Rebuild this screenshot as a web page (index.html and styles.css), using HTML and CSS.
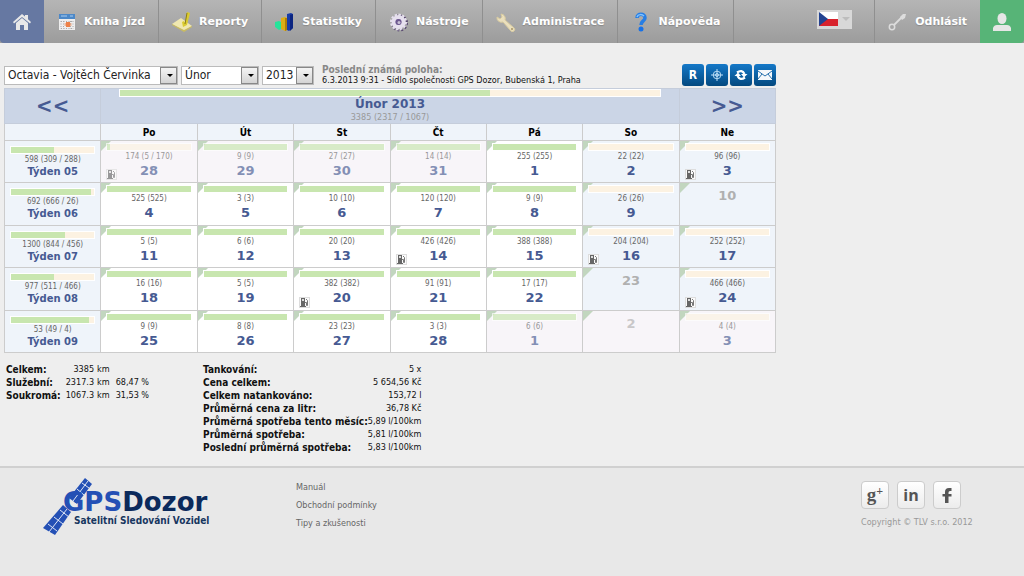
FILE: index.html
```html
<!DOCTYPE html>
<html lang="cs">
<head>
<meta charset="utf-8">
<title>GPS Dozor – Kniha jízd</title>
<link rel="stylesheet" href="styles.css">
</head>
<body>
<svg class="defs" aria-hidden="true">
  <symbol id="fuel" viewBox="0 0 9 9">
    <path d="M1 0h4v8h1v1H0V8h1z" fill="#666"/><path d="M2 1h2v2H2z" fill="#ddd"/>
    <path d="M5 4.500H6.500V7.500H7.500V2.500L6 1" fill="none" stroke="#777"/>
  </symbol>
</svg>
<header class="nav">
  <a class="home" href="#" aria-label="Domů"><svg width="18" height="18" viewBox="0 0 18 18"><path d="M9 1L0 9l1 1.500L9 4l8 6.500L18 9l-3-2.700V2h-3v1.600z" fill="#e8e8e8"/><path d="M3 10l6-5 6 5v7h-4v-5H7v5H3z" fill="#e8e8e8"/></svg></a>
  <nav class="menu">
    <a class="item" href="#"><svg width="20" height="20" viewBox="0 0 20 20"><path d="M2 2h16v16H2z" fill="#eee"/><path d="M2 2h16v5H2z" fill="#4c88c8"/><path d="M4 4h6M13 4h3" stroke="#a9cdf0"/><path d="M4 9v8M6.500 9v8M13.500 9v8M16 9v8M4 9.500h12M4 16.500h12" stroke="#aaa" stroke-dasharray="1 1.500"/><path d="M9 10h4v5H9z" fill="#ed8148"/><path d="M7.500 11h7v3h-7z" fill="#ed8148" opacity=".5"/></svg>Kniha jízd</a>
    <a class="item" href="#"><svg width="20" height="20" viewBox="0 0 20 20"><path d="M0 12L9 6l11 8-8 5z" fill="#f0e8b0"/><path d="M0 12l12 6 8-4v1l-8 5L0 13z" fill="#c9bb62"/><path d="M15 0l3 1-3 12-4 2-1-5 2-1 1 2z" fill="#dacb30"/><path d="M15 1l-2 11" stroke="#8b7d18" fill="none"/></svg>Reporty</a>
    <a class="item" href="#"><svg width="20" height="20" viewBox="0 0 20 20"><path d="M0 10l4-1 2 1v7l-2 1-4-3z" fill="#25e39a"/><path d="M6 6l4-1 2 1v12l-2 1-4-2z" fill="#dcae16"/><path d="M12 2l4-1 2 1v14l-4 3-2-1z" fill="#183ca8"/><path d="M15 3l3-1v14l-3 3z" fill="#0c2581"/><path d="M10 6l2 0v12l-2 1z" fill="#b07f08"/></svg>Statistiky</a>
    <a class="item" href="#"><svg width="20" height="20" viewBox="0 0 20 20"><circle cx="10.500" cy="11" r="7.500" fill="none" stroke="#594971" stroke-width="2" stroke-dasharray="2 2"/><circle cx="9.500" cy="10" r="7.500" fill="none" stroke="#e6e0ee" stroke-width="2" stroke-dasharray="2.400 1.500"/><circle cx="9.500" cy="10" r="5" fill="#a493bd" stroke="#e6e0ee" stroke-width="4"/><circle cx="9.500" cy="10" r="3" fill="#6d5890"/><circle cx="10" cy="10.500" r="1.500" fill="#c9c0d6"/></svg>Nástroje</a>
    <a class="item" href="#"><svg width="20" height="20" viewBox="0 0 20 20"><path d="M5 2a4.500 4.500 0 0 1 4 6l9 8a2 2 0 0 1-3 3L7 10A4.500 4.500 0 0 1 1 5l3 2 2-2z" fill="#eadfbd" stroke="#d8cba0" stroke-width="1"/><circle cx="16" cy="17" r="1" fill="#a79567"/></svg>Administrace</a>
    <a class="item" href="#"><svg width="20" height="20" viewBox="0 0 20 20"><path d="M6 6c0-5 8-5 8 0 0 3-4 3-4 7" fill="none" stroke="#277ee4" stroke-width="3.500"/><path d="M6 5c1-3 5-3 7-1" fill="none" stroke="#82c3ff" stroke-width="1.500"/><circle cx="10" cy="17" r="2.500" fill="#1671e8"/></svg>Nápověda</a>
  </nav>
  <button class="lang" type="button" aria-label="Jazyk: čeština"><svg width="35" height="19" viewBox="0 0 35 19"><path d="M2 2h19v7H2z" fill="#fff"/><path d="M2 9h19v7H2z" fill="#d8222c"/><path d="M2 2l9 7-9 7z" fill="#234391"/><path d="M25 7h8l-4 4z" fill="#bdbdbd"/></svg></button>
  <a class="item logout" href="#"><svg width="20" height="20" viewBox="0 0 20 20"><circle cx="4" cy="15" r="2.700" fill="none" stroke="#ddd" stroke-width="1.500"/><path d="M6 13l8-8" stroke="#ddd" stroke-width="1.800"/><path d="M12 5l3-3 3 0-1 4-3 2z" fill="#ddd"/></svg>Odhlásit</a>
  <a class="user" href="#" aria-label="Uživatel"><svg width="18" height="18" viewBox="0 0 18 18"><ellipse cx="9" cy="5.500" rx="4.500" ry="5.500" fill="#e6e6e6"/><path d="M0 18v-3q1-3 4-3h10q3 0 4 3v3z" fill="#e6e6e6"/></svg></a>
</header>

<main class="content">
  <div class="toolbar">
    <form class="filters">
      <span class="pick car"><select aria-label="Vozidlo"><option>Octavia - Vojtěch Červinka</option></select></span>
      <span class="pick month"><select aria-label="Měsíc"><option>Únor</option></select></span>
      <span class="pick year"><select aria-label="Rok"><option>2013</option></select></span>
    </form>
    <div class="position"><strong>Poslední známá poloha:</strong><span>6.3.2013 9:31 - Sídlo společnosti GPS Dozor, Bubenská 1, Praha</span></div>
    <div class="actions">
      <button type="button">R</button>
      <button type="button" aria-label="Zaměřit"><svg width="14" height="14" viewBox="0 0 14 14" fill="none" stroke="#b9dcf5"><circle cx="7" cy="7" r="3.800"/><circle cx="7" cy="7" r="1.500"/><path d="M7 1v12M1 7h12"/></svg></button>
      <button type="button" aria-label="Obnovit"><svg width="14" height="14" viewBox="0 0 14 14"><path d="M3 4.500Q8 1 10.500 6" fill="none" stroke="#fff" stroke-width="2.200"/><path d="M7 6h6.500L10 9.500z" fill="#fff"/><path d="M11 9.500Q6 13 3.500 8" fill="none" stroke="#fff" stroke-width="2.200"/><path d="M7 8H.5L4 4.500z" fill="#fff"/></svg></button>
      <button type="button" aria-label="Zpráva"><svg width="14" height="10" viewBox="0 0 14 10"><path d="M0 0h14v10H0z" fill="#f4f8fb"/><path d="M0 1l7 5 7-5M0 9l4-5M14 9l-4-5" fill="none" stroke="#2771ad"/></svg></button>
    </div>
  </div>

  <table class="calendar">
    <thead>
      <tr class="top">
        <td><a class="arrow" href="#" aria-label="Předchozí měsíc">&lt;&lt;</a></td>
        <td colspan="6"><div class="bar wide"><i style="width:68.5%"></i></div><h1>Únor 2013</h1><p>3385 (2317 / 1067)</p></td>
        <td><a class="arrow" href="#" aria-label="Další měsíc">&gt;&gt;</a></td>
      </tr>
      <tr class="days"><th></th><th>Po</th><th>Út</th><th>St</th><th>Čt</th><th>Pá</th><th>So</th><th>Ne</th></tr>
    </thead>
    <tbody id="weeks"></tbody>
  </table>

  <div class="stats">
    <table class="totals">
      <tr><th>Celkem:</th><td>3385</td><td>km</td><td></td></tr>
      <tr><th>Služební:</th><td>2317.3</td><td>km</td><td>68,47 %</td></tr>
      <tr><th>Soukromá:</th><td>1067.3</td><td>km</td><td>31,53 %</td></tr>
    </table>
    <table class="fueling">
      <tr><th>Tankování:</th><td>5 x</td></tr>
      <tr><th>Cena celkem:</th><td>5 654,56 Kč</td></tr>
      <tr><th>Celkem natankováno:</th><td>153,72 l</td></tr>
      <tr><th>Průměrná cena za litr:</th><td>36,78 Kč</td></tr>
      <tr><th>Průměrná spotřeba tento měsíc:</th><td>5,89 l/100km</td></tr>
      <tr><th>Průměrná spotřeba:</th><td>5,81 l/100km</td></tr>
      <tr><th>Poslední průměrná spotřeba:</th><td>5,83 l/100km</td></tr>
    </table>
  </div>
</main>

<footer class="footer">
  <a class="logo" href="#">
    <svg width="172" height="60" viewBox="0 0 172 60" role="img" aria-label="GPSDozor Satelitní Sledování Vozidel">
      <g fill="#2450b5"><path d="M42 0l7 6-15 20-8-6z"/><path d="M20 27l8 7-16 23L0 50z"/></g>
      <path d="M45 3L30 23M34 11l7 6M39 5l7 5M24 31L6 54M17 32l9 7M11 39l9 7M5 46l9 7" stroke="#dfe6f5" fill="none"/>
      <text class="brand" x="20" y="33"><tspan fill="#2450b5">GPS</tspan><tspan fill="#0b2a5c">Dozor</tspan></text>
      <text class="tagline" x="31" y="46">Satelitní Sledování Vozidel</text>
    </svg>
  </a>
  <nav class="links"><a href="#">Manuál</a><a href="#">Obchodní podmínky</a><a href="#">Tipy a zkušenosti</a></nav>
  <div class="social">
    <div class="badges">
      <a class="gplus" href="#" aria-label="Google+">g<sup>+</sup></a>
      <a href="#" aria-label="LinkedIn">in</a>
      <a href="#" aria-label="Facebook"><svg width="10" height="15" viewBox="0 0 10 15"><path d="M9.500 0v3H8Q6.500 3 6.500 4.500V6h3v2.500h-3V15h-3.500V8.500H.5V6H3V4q0-4 4-4z" fill="#555"/></svg></a>
    </div>
    <small>Copyright © TLV s.r.o. 2012</small>
  </div>
</footer>
<script src="calendar.js"></script>
</body>
</html>
```
FILE: styles.css
```css
* { box-sizing: border-box; }
body {
  margin: 0;
  min-height: 100vh;
  display: flex;
  flex-direction: column;
  background: #eee;
  color: #111;
  font: 10px/13px "DejaVu Sans Condensed", "DejaVu Sans", sans-serif;
}
a { color: inherit; text-decoration: none; }
button, select { font: inherit; }
.defs { display: none; }

.nav {
  display: flex;
  height: 43px;
  background: linear-gradient(#b5b5b5, #9c9c9c);
  color: #fff;
}
.home, .user { width: 44px; display: flex; align-items: center; justify-content: center; }
.home { background: #6678a2; border-bottom-left-radius: 4px; }
.user { background: #57b477; border-bottom-right-radius: 4px; }
.menu { display: flex; flex: 1; }
.item {
  display: flex;
  align-items: center;
  gap: 7px;
  padding: 0 13px;
  border-right: 1px solid #8f8f8f;
  font: bold 11px/13px "DejaVu Sans", sans-serif;
  text-shadow: 0 1px 1px #888;
}
.logout { border-left: 1px solid #8f8f8f; border-right: 0; }
.lang {
  align-self: center;
  height: 19px;
  margin: 0 22px 4px 0;
  padding: 0;
  border: 0;
  background: #d8d8d8;
}
.lang svg { display: block; }

.content { padding: 21px 4px 12px; }
.toolbar {
  display: flex;
  align-items: center;
  max-width: 772px;
  height: 22px;
}
.filters { display: flex; gap: 3px; }
.pick {
  position: relative;
  display: block;
  height: 19px;
  border: 1px solid #bbb;
  background: #fff;
}
.car { width: 174px; }
.month { width: 78px; }
.year { width: 52px; }
.pick select {
  display: block;
  width: 100%;
  height: 17px;
  padding: 0 16px 0 3px;
  border: 0;
  appearance: none;
  background: transparent;
  color: #222;
  font-size: 12px;
  line-height: 17px;
}
.pick::before, .pick::after { content: ""; position: absolute; pointer-events: none; }
.pick::before {
  top: 0; right: 0; bottom: 0;
  width: 15px;
  border: 1px solid #888;
  background: linear-gradient(#f4f4f4, #d4d4d4);
}
.pick::after {
  top: 7px; right: 4px;
  border: 3px solid transparent;
  border-top-color: #000;
  border-bottom: 0;
}
.position {
  flex: 1;
  display: flex;
  flex-direction: column;
  padding-left: 8px;
  font-size: 9px;
  line-height: 11px;
}
.position strong { color: #888; font-size: 10px; }
.actions { display: flex; gap: 2px; }
.actions button {
  display: flex;
  align-items: center;
  justify-content: center;
  width: 22px;
  height: 22px;
  padding: 0;
  border: 0;
  border-radius: 3px;
  background: linear-gradient(#1478c8, #04497f);
  color: #fff;
  font-size: 12px;
  font-weight: bold;
}

.calendar {
  width: 100%;
  max-width: 772px;
  height: 265px;
  margin-top: 2px;
  border-collapse: collapse;
  table-layout: fixed;
  text-align: center;
}
.calendar td, .calendar th { position: relative; padding: 0; border: 1px solid #ccc; vertical-align: top; }
.top { height: 35px; background: #cbd5e6; color: #465a92; }
.calendar .top td { border-color: #c5cddb; }
.days { height: 17px; background: #eff4fa; color: #000; }
.calendar .arrow { display: block; font-size: 22px; font-weight: bold; line-height: 34px; }
.calendar h1 { margin: 0; font: bold 12px/15px "DejaVu Sans", sans-serif; }
.calendar p { margin: 0; font-size: 9px; line-height: 11px; color: #999; }
.calendar .days th { vertical-align: middle; line-height: 15px; }
.bar { height: 8px; margin: 2px 5px 0; border: 1px solid #fff; background: #fcf2e2; }
.bar i { display: block; height: 100%; background: #c8e6af; }
.wide { margin: 0 18px; }
.km { display: block; font-size: 8px; line-height: 11px; color: #666; }
.num { display: block; font: bold 13px/18px "DejaVu Sans", sans-serif; color: #465a92; }
.week { background: #eff4fa; }
.week .bar { margin-top: 5px; }
.week .num { font: bold 10px/14px "DejaVu Sans", sans-serif; }
.day { background: #fff; }
.weekend { background: #eff4fa; }
.other { background: #f8f5f9; }
.other > * { opacity: .65; }
.day::before {
  content: "";
  position: absolute;
  top: 0; left: 0;
  border: 5px solid transparent;
  border-top-color: #c2d6bf;
  border-left-color: #c2d6bf;
}
.day > * { position: relative; }
.empty .num { padding-top: 4px; color: #b0b0b0; }
.day .fuel {
  position: absolute;
  left: 5px; bottom: 2px;
  width: 11px; height: 11px;
  border: 1px solid #ddd;
  background: #fafafa;
}

.stats { display: flex; gap: 54px; padding: 10px 2px 0; }
.stats table { border-collapse: collapse; align-self: flex-start; }
.stats th, .stats td { padding: 0; text-align: right; white-space: nowrap; }
.stats th { text-align: left; }
.totals td { padding-left: 3px; font-size: 9px; }
.totals td:nth-child(2) { width: 27px; padding-left: 5px; }
.totals td:last-child { padding-left: 6px; }
.fueling { width: 215px; }
.fueling td { font-size: 9px; }

.footer {
  flex: 1;
  display: flex;
  align-items: flex-start;
  padding: 10px 43px;
  border-top: 2px solid #d0d0d0;
  background: #e8e8e8;
  color: #666;
}
.logo { width: 253px; }
.brand { font: bold 26px "DejaVu Sans", sans-serif; }
.tagline { font: bold 10px "DejaVu Sans Condensed", sans-serif; fill: #17365f; }
.links { flex: 1; display: flex; flex-direction: column; font-size: 9px; line-height: 18px; }
.social { width: 120px; }
.badges { display: flex; gap: 8px; padding-top: 3px; }
.badges a {
  display: flex;
  align-items: center;
  justify-content: center;
  width: 28px;
  height: 28px;
  border: 1px solid #ccc;
  border-radius: 4px;
  background: linear-gradient(#fff, #ececec);
  color: #555;
  font: bold 16px "Open Sans", sans-serif;
}
.badges .gplus { font: bold 19px "Liberation Serif", serif; }
.gplus sup { align-self: flex-start; font-size: 12px; line-height: 18px; }
.social small { display: block; padding-top: 7px; font-size: 9px; color: #999; }
```
FILE: calendar.js
```js
// Each day: [number, kilometres, flags]; b = private trip, p = part private, f = fuelled, o = other month
const weeks = [
  ["05", "598 (309 / 288)", 52, [[28, "174 (5 / 170)", "pfo"], [29, "9 (9)", "o"], [30, "27 (27)", "o"], [31, "14 (14)", "o"], [1, "255 (255)", ""], [2, "22 (22)", "b"], [3, "96 (96)", "bf"]]],
  ["06", "692 (666 / 26)", 96, [[4, "525 (525)", ""], [5, "3 (3)", ""], [6, "10 (10)", ""], [7, "120 (120)", ""], [8, "9 (9)", ""], [9, "26 (26)", "b"], [10, "", ""]]],
  ["07", "1300 (844 / 456)", 65, [[11, "5 (5)", ""], [12, "6 (6)", ""], [13, "20 (20)", ""], [14, "426 (426)", "f"], [15, "388 (388)", ""], [16, "204 (204)", "bf"], [17, "252 (252)", "b"]]],
  ["08", "977 (511 / 466)", 52, [[18, "16 (16)", ""], [19, "5 (5)", ""], [20, "382 (382)", "f"], [21, "91 (91)", ""], [22, "17 (17)", ""], [23, "", ""], [24, "466 (466)", "bf"]]],
  ["09", "53 (49 / 4)", 93, [[25, "9 (9)", ""], [26, "8 (8)", ""], [27, "23 (23)", ""], [28, "3 (3)", ""], [1, "6 (6)", "o"], [2, "", "o"], [3, "4 (4)", "bo"]]]
];

const bar = share => `<div class="bar"><i style="width:${share}%"></i></div>`;

document.getElementById("weeks").innerHTML = weeks.map(([week, total, share, days]) => {
  const cells = days.map(([number, km, flags], i) => {
    const kind = [
      "day",
      i > 4 ? "weekend" : "",
      flags.includes("o") ? "other" : "",
      km ? "" : "empty"
    ].filter(Boolean).join(" ");
    const dayShare = flags.includes("b") ? 0 : flags.includes("p") ? 3 : 100;
    const trip = km ? `${bar(dayShare)}<span class="km">${km}</span>` : "";
    const fuel = flags.includes("f") ? '<svg class="fuel"><use href="#fuel"/></svg>' : "";
    return `<td class="${kind}">${trip}<a class="num" href="#">${number}</a>${fuel}</td>`;
  }).join("");
  return `<tr><td class="week">${bar(share)}<span class="km">${total}</span><a class="num" href="#">Týden ${week}</a></td>${cells}</tr>`;
}).join("");
```
